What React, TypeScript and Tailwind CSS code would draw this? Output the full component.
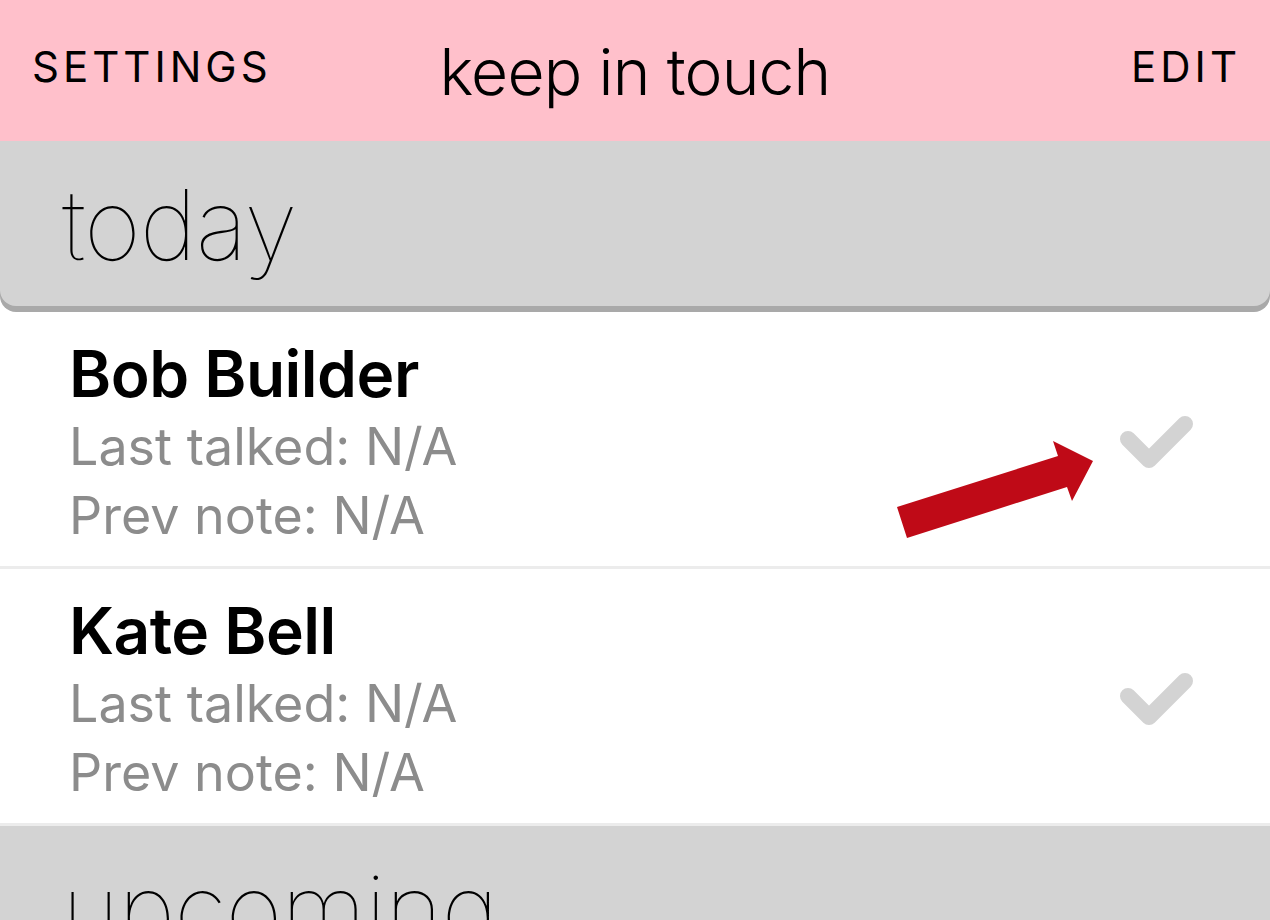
const contacts = [
  { name: "Bob Builder", last: "N/A", note: "N/A" },
  { name: "Kate Bell", last: "N/A", note: "N/A" },
];

const Check = () => (
  <svg width="80" height="62" viewBox="0 0 80 62" className="shrink-0">
    <polyline
      points="10,27 31,48 67,12"
      fill="none"
      stroke="#d3d3d3"
      strokeWidth="16"
      strokeLinecap="round"
      strokeLinejoin="round"
    />
  </svg>
);

const Arrow = () => (
  <svg
    className="absolute left-0 top-0 pointer-events-none"
    width="1270"
    height="920"
    viewBox="0 0 1270 920"
  >
    <polygon
      points="897,507 1058,456 1053,441 1093,461 1072,501 1067,487 907,538"
      fill="#bf0a17"
    />
  </svg>
);

const SectionHeader = ({ title }: { title: string }) => (
  <div className="bg-[#d3d3d3] h-[165px] rounded-b-[16px] shadow-[0_6px_0_#a9a9a9] pl-[62px] pt-[24px] relative z-10">
    <h2 className="text-[98px] leading-[120px] font-thin tracking-[-1px] text-black">
      {title}
    </h2>
  </div>
);

const ContactRow = ({
  name,
  last,
  note,
}: {
  name: string;
  last: string;
  note: string;
}) => (
  <div className="flex items-center justify-between border-b-[3px] border-[#ececec] pl-[69px] pr-[72px] pt-[24px] pb-[16px]">
    <div>
      <div className="text-[64px] leading-[76px] font-semibold text-black tracking-[-0.5px]">
        {name}
      </div>
      <div className="text-[52px] leading-[69px] text-[#8c8c8c]">
        Last talked: {last}
      </div>
      <div className="text-[52px] leading-[69px] text-[#8c8c8c]">
        Prev note: {note}
      </div>
    </div>
    <Check />
  </div>
);

export default function App() {
  return (
    <div
      className="relative w-[1270px] h-[920px] overflow-hidden bg-white"
      style={{ fontFamily: "Inter, Roboto, 'Noto Sans', sans-serif" }}
    >
      <header className="h-[141px] bg-[#ffc0cb] grid grid-cols-[1fr_auto_1fr] items-center px-[32px] pb-[8px]">
        <span className="text-[42px] tracking-[4px] text-black justify-self-start">
          SETTINGS
        </span>
        <span className="text-[64px] font-light text-black tracking-[-0.8px] pt-[10px]">
          keep in touch
        </span>
        <span className="text-[42px] tracking-[4px] text-black justify-self-end mr-[-3px]">
          EDIT
        </span>
      </header>

      <SectionHeader title="today" />
      <div className="pt-[6px]">
        {contacts.map((c) => (
          <ContactRow key={c.name} {...c} />
        ))}
      </div>
      <SectionHeader title="upcoming" />

      <Arrow />
    </div>
  );
}
